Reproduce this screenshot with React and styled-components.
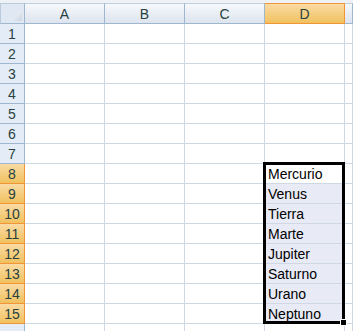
import React from "react";
import styled, { createGlobalStyle, css } from "styled-components";

const Global = createGlobalStyle`
  html, body { margin: 0; padding: 0; background: #ffffff; }
  body { font-family: "Liberation Sans", Arial, sans-serif; }
`;

const Sheet = styled.div`
  position: relative;
  width: 353px;
  height: 331px;
  overflow: hidden;
  background: #ffffff;
`;

const TopStrip = styled.div`
  height: 3px;
  background: #eef2f7;
`;

const Grid = styled.div`
  display: grid;
  grid-template-columns: 25px 80px 80px 80px 80px 1fr;
  grid-template-rows: 21px repeat(16, 20px);
`;

const Corner = styled.div`
  box-sizing: border-box;
  position: relative;
  background: #dfe8f3;
  border-right: 1px solid #9eb6ce;
  border-bottom: 1px solid #9eb6ce;
  border-top: 1px solid #b8cadc;
  border-left: 1px solid #b8cadc;
  svg { position: absolute; right: 2px; bottom: 2px; }
`;

const selectedHead = css`
  background: linear-gradient(#f9dba4, #f1c15f);
`;

const ColHead = styled.div`
  box-sizing: border-box;
  display: flex;
  align-items: center;
  justify-content: center;
  background: linear-gradient(#f6f8fb, #dde4ee);
  border-right: 1px solid #9eb6ce;
  border-bottom: 1px solid #9eb6ce;
  border-top: 1px solid #c2d0de;
  color: #27413e;
  font-size: 14px;
  ${(p) => p.$sel && selectedHead}
  ${(p) => p.$sel && css`border-color: #f29536;`}
`;

const RowHead = styled.div`
  box-sizing: border-box;
  display: flex;
  align-items: flex-end;
  justify-content: center;
  padding-bottom: 1px;
  background: #e4ecf7;
  border-right: 1px solid #9eb6ce;
  border-bottom: 1px solid #9eb6ce;
  color: #27413e;
  font-size: 14px;
  line-height: 16px;
  ${(p) => p.$sel && selectedHead}
  ${(p) => p.$sel && css`border-color: #f29536;`}
`;

const Cell = styled.div`
  box-sizing: border-box;
  display: flex;
  align-items: flex-end;
  padding: 0 0 1px 3px;
  background: ${(p) => (p.$range ? "#e8eaf5" : "#ffffff")};
  border-right: 1px solid #d0d7e5;
  border-bottom: 1px solid #d0d7e5;
  color: #000000;
  font-size: 14px;
  line-height: 16px;
  white-space: nowrap;
  overflow: hidden;
`;

const Selection = styled.div`
  position: absolute;
  left: 263px;
  top: 162px;
  width: 82px;
  height: 162px;
  box-sizing: border-box;
  border: 3px solid #000000;
  pointer-events: none;
`;

const FillHandle = styled.div`
  position: absolute;
  left: 340px;
  top: 319px;
  width: 5px;
  height: 5px;
  background: #000000;
  border: 1px solid #ffffff;
`;

const cols = ["A", "B", "C", "D", ""];
const planets = ["Mercurio", "Venus", "Tierra", "Marte", "Jupiter", "Saturno", "Urano", "Neptuno"];

export default function App() {
  const rows = Array.from({ length: 16 }, (_, i) => i + 1);
  return (
    <>
      <Global />
      <Sheet>
        <TopStrip />
        <Grid>
          <Corner>
            <svg width="11" height="11" viewBox="0 0 11 11">
              <defs>
                <linearGradient id="tri" x1="0" y1="0" x2="1" y2="1">
                  <stop offset="0" stopColor="#ffffff" />
                  <stop offset="1" stopColor="#c9d3df" />
                </linearGradient>
              </defs>
              <polygon points="11,0 11,11 0,11" fill="url(#tri)" />
            </svg>
          </Corner>
          {cols.map((c, i) => (
            <ColHead key={i} $sel={c === "D"}>{c}</ColHead>
          ))}
          {rows.map((r) => {
            const inRange = r >= 8 && r <= 15;
            return (
              <React.Fragment key={r}>
                <RowHead $sel={inRange}>{r <= 15 ? r : ""}</RowHead>
                <Cell />
                <Cell />
                <Cell />
                <Cell $range={inRange && r !== 8}>{inRange ? planets[r - 8] : ""}</Cell>
                <Cell />
              </React.Fragment>
            );
          })}
        </Grid>
        <Selection />
        <FillHandle />
      </Sheet>
    </>
  );
}
